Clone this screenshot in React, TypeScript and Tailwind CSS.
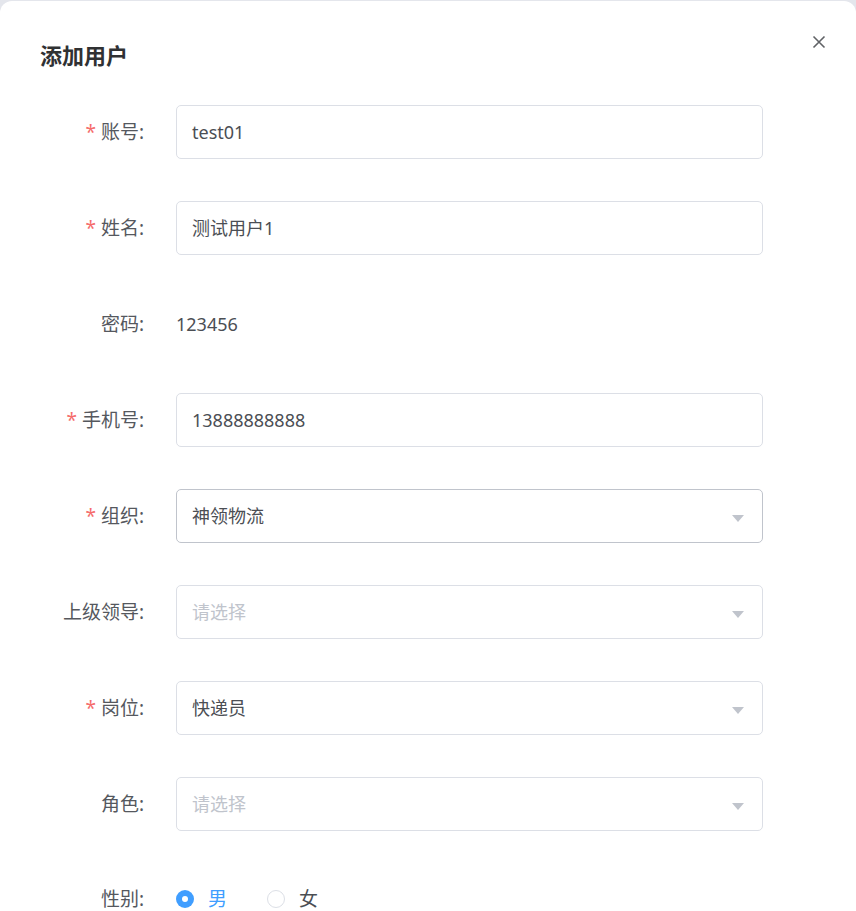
import React from "react";

const font = { fontFamily: '"Noto Sans", "Noto Sans CJK SC", sans-serif' };

function Label({ text, required }: { text: string; required?: boolean }) {
  return (
    <div className="w-[144px] shrink-0 text-right text-[19px] text-[#55585e] leading-[22px] whitespace-nowrap">
      {required && <span className="text-[#f56c6c] mr-[5px]">*</span>}
      {text}:
    </div>
  );
}

function Arrow() {
  return (
    <svg width="12" height="7" viewBox="0 0 12 7" className="absolute right-[18px] top-[25px]">
      <path d="M0 0 H12 L6 7 Z" fill="#c0c4cc" />
    </svg>
  );
}

function Field({
  value,
  placeholder,
  select,
  focused,
}: {
  value?: string;
  placeholder?: string;
  select?: boolean;
  focused?: boolean;
}) {
  return (
    <div
      className={`relative ml-[32px] w-[587px] h-[54px] rounded-[5px] border bg-white px-[15px] flex items-center text-[18px] ${
        focused ? "border-[#c0c4cc]" : "border-[#dcdfe6]"
      }`}
    >
      {value ? (
        <span className="text-[#4b4e54]">{value}</span>
      ) : (
        <span className="text-[#c0c4cc]">{placeholder}</span>
      )}
      {select && <Arrow />}
    </div>
  );
}

function Row({ children }: { children: React.ReactNode }) {
  return <div className="flex items-center h-[54px] mb-[42px]">{children}</div>;
}

export default function App() {
  return (
    <div className="w-[856px] h-[911px] bg-[#e4e6ec] overflow-hidden" style={font}>
      <div className="mt-[1px] bg-white rounded-t-[12px] h-[910px] relative">
        <div className="flex items-start justify-between pl-[40px] pr-[30px] pt-[38px] h-[104px]">
          <div className="text-[22px] font-bold text-[#303133] leading-[32px]">添加用户</div>
          <svg width="14" height="14" viewBox="0 0 14 14" className="mt-[-4px]">
            <path d="M1.5 1.5 L12.5 12.5 M12.5 1.5 L1.5 12.5" stroke="#606266" strokeWidth="1.6" />
          </svg>
        </div>
        <div className="flex flex-col">
          <Row>
            <Label text="账号" required />
            <Field value="test01" />
          </Row>
          <Row>
            <Label text="姓名" required />
            <Field value="测试用户1" />
          </Row>
          <Row>
            <Label text="密码" />
            <div className="ml-[32px] text-[18px] text-[#4b4e54]">123456</div>
          </Row>
          <Row>
            <Label text="手机号" required />
            <Field value="13888888888" />
          </Row>
          <Row>
            <Label text="组织" required />
            <Field value="神领物流" select focused />
          </Row>
          <Row>
            <Label text="上级领导" />
            <Field placeholder="请选择" select />
          </Row>
          <Row>
            <Label text="岗位" required />
            <Field value="快递员" select />
          </Row>
          <Row>
            <Label text="角色" />
            <Field placeholder="请选择" select />
          </Row>
          <div className="flex items-center h-[22px] mt-[15px]">
            <Label text="性别" />
            <div className="ml-[32px] flex items-center text-[19px] leading-[22px]">
              <span className="w-[18px] h-[18px] rounded-full bg-[#409eff] flex items-center justify-center">
                <span className="w-[6px] h-[6px] rounded-full bg-white" />
              </span>
              <span className="ml-[14px] text-[#409eff]">男</span>
              <span className="ml-[40px] w-[18px] h-[18px] rounded-full border border-[#dcdfe6] bg-white" />
              <span className="ml-[14px] text-[#4b4e54]">女</span>
            </div>
          </div>
        </div>
      </div>
    </div>
  );
}
